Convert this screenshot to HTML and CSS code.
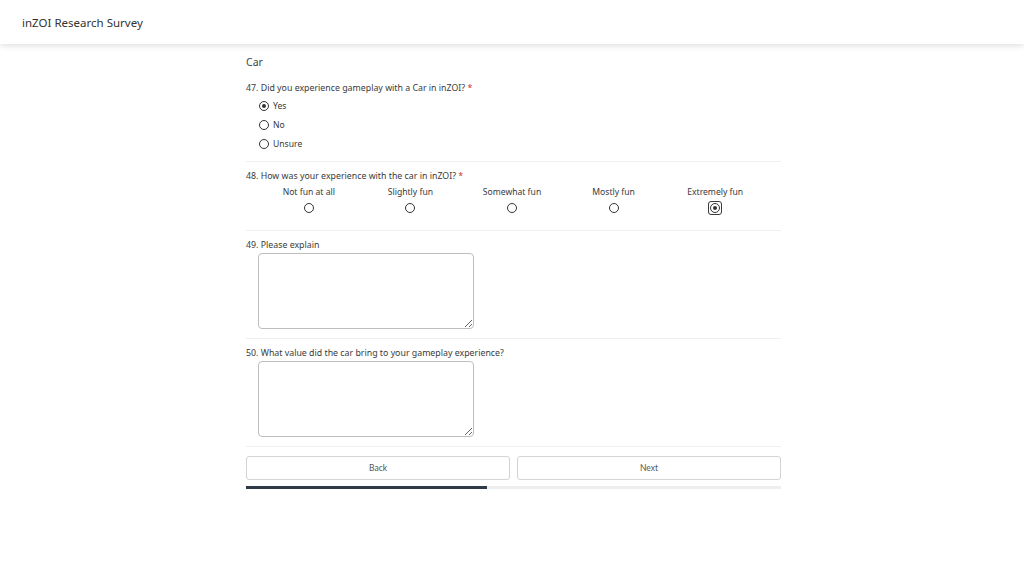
FILE: index.html
```html
<!DOCTYPE html>
<html lang="en">
<head>
  <meta charset="UTF-8" />
  <title>inZOI Research Survey</title>
  <link rel="stylesheet" href="styles.css">
</head>
<body>
  <header class="topbar">
    <span class="brand">inZOI Research Survey</span>
  </header>

  <main class="survey">
    <h2 class="page-title">Car</h2>

    <div class="question">
      <p class="q-label">47. Did you experience gameplay with a Car in inZOI? <span class="req">*</span></p>
      <label class="option"><input type="radio" name="q47" checked> Yes</label>
      <label class="option"><input type="radio" name="q47"> No</label>
      <label class="option"><input type="radio" name="q47"> Unsure</label>
    </div>

    <div class="question">
      <p class="q-label">48. How was your experience with the car in inZOI? <span class="req">*</span></p>
      <div class="scale">
        <label class="scale-col"><span>Not fun at all</span><input type="radio" name="q48"></label>
        <label class="scale-col"><span>Slightly fun</span><input type="radio" name="q48"></label>
        <label class="scale-col"><span>Somewhat fun</span><input type="radio" name="q48"></label>
        <label class="scale-col"><span>Mostly fun</span><input type="radio" name="q48"></label>
        <label class="scale-col"><span>Extremely fun</span><span class="focus-ring"><input type="radio" name="q48" checked></span></label>
      </div>
    </div>

    <div class="question">
      <p class="q-label">49. Please explain</p>
      <textarea class="answer"></textarea>
    </div>

    <div class="question">
      <p class="q-label">50. What value did the car bring to your gameplay experience?</p>
      <textarea class="answer"></textarea>
    </div>

    <div class="nav">
      <button class="nav-btn">Back</button>
      <button class="nav-btn">Next</button>
    </div>
    <div class="progress"><div class="progress-fill" style="width: 45%"></div></div>
  </main>
</body>
</html>
```

FILE: styles.css
```css
body {
  margin: 0;
  background: #fff;
  font-family: "Noto Sans", "Open Sans", sans-serif;
  color: #3a3a3a;
}
.topbar {
  height: 44px;
  display: flex;
  align-items: center;
  padding-left: 22px;
  background: #fff;
  box-shadow: 0 2px 6px rgba(0,0,0,0.12);
}
.brand {
  font-size: 11.5px;
  color: #333;
}
.survey {
  width: 535px;
  margin: 0 auto;
  padding-left: 3px;
}
.page-title {
  margin: 0 0 4px 0;
  padding-top: 10px;
  font-size: 10.5px;
  line-height: 16px;
  font-weight: normal;
  color: #444;
}
.question {
  padding: 8px 0 9px 0;
  border-bottom: 1px solid #efefef;
}
.question:first-of-type {
  padding-bottom: 8px;
}
.q-label {
  margin: 0 0 2px 0;
  font-size: 8.8px;
  line-height: 12px;
  color: #3a3a3a;
}
.req {
  color: #d0342c;
}
.option {
  display: flex;
  align-items: center;
  gap: 4px;
  height: 19px;
  padding-left: 13px;
  font-size: 8.6px;
  color: #3a3a3a;
}
input[type="radio"] {
  appearance: none;
  margin: 0;
  width: 10px;
  height: 10px;
  border: 1.3px solid #333;
  border-radius: 50%;
  box-sizing: border-box;
  display: grid;
  place-items: center;
  background: #fff;
}
input[type="radio"]:checked::after {
  content: "";
  width: 4px;
  height: 4px;
  border-radius: 50%;
  background: #333;
}
.focus-ring {
  display: flex;
  margin: -2px 0;
  padding: 1px;
  border: 1.5px solid #3a3a3a;
  border-radius: 3px;
}
.scale {
  display: grid;
  grid-template-columns: repeat(5, 1fr);
  padding: 0 15px 0 12px;
  margin: 4px 0 8px 0;
}
.scale-col {
  display: flex;
  flex-direction: column;
  align-items: center;
  gap: 5px;
  font-size: 8.6px;
  line-height: 12px;
}
.answer {
  display: block;
  margin: 1px 0 0 12px;
  width: 216px;
  height: 76px;
  box-sizing: border-box;
  border: 1px solid #bdbdbd;
  border-radius: 4px;
  resize: vertical;
}
.nav {
  display: flex;
  gap: 7px;
  margin-top: 9px;
}
.nav-btn {
  flex: 1;
  height: 24px;
  background: #fff;
  border: 1px solid #d4d4d4;
  border-radius: 3px;
  font-family: Lato, "Liberation Sans", sans-serif;
  font-size: 8.5px;
  color: #555;
  cursor: pointer;
}
.progress {
  margin-top: 6px;
  height: 3px;
  background: #eeeeee;
}
.progress-fill {
  height: 100%;
  background: #2f3a47;
}
```
